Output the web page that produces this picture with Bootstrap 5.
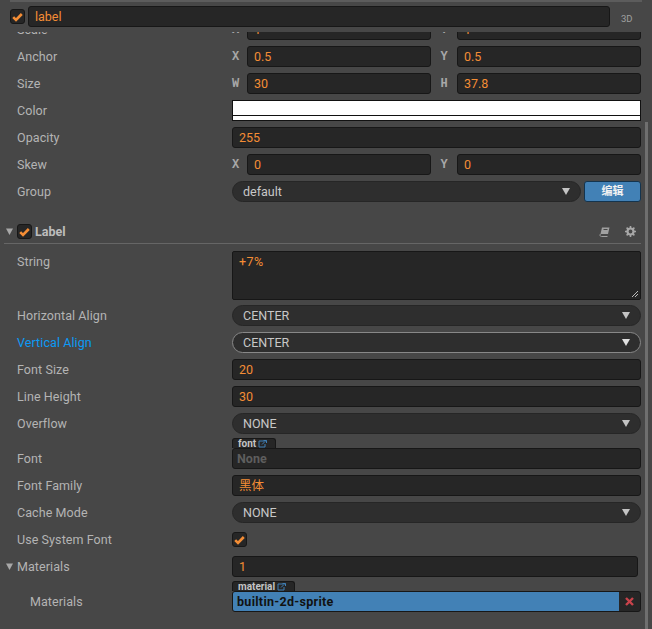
<!DOCTYPE html>
<html lang="zh">
<head>
<meta charset="utf-8">
<title>Inspector</title>
<link href="https://cdn.jsdelivr.net/npm/bootstrap@5.3.0/dist/css/bootstrap.min.css" rel="stylesheet">
<style>
html,body{height:629px;overflow:hidden;background:#474747;}
body{font-family:Roboto,"Noto Sans CJK SC",sans-serif;font-size:12.5px;color:#b4b4b4;}
.shell{width:652px;height:629px;position:relative;overflow:hidden;}
.topline{height:2px;margin-left:10px;width:632px;background:#5c5c5c;}
.headbar{height:30px;padding:4px 0 0 10px;gap:3px;background:#474747;}
.topcheck{margin-top:3px;}
.tbox.topname{width:582px;flex:none;}
.tag3d{margin-left:8px;font-size:9.5px;color:#a0a0a0;}
.pane{height:597px;overflow:hidden;padding:0 11px 0 17px;}
.clipped{height:11px;overflow:hidden;display:flex;flex-direction:column;justify-content:flex-end;}
.clipped .prow{flex:none;}
.prow{height:27px;display:flex;align-items:center;}
.plabel{width:215px;flex:none;white-space:nowrap;letter-spacing:.08px;}
.prow>.plabel{padding-top:2px;}
.pvalue{flex:1;min-width:0;display:flex;align-items:center;}
.tbox{height:21px;background:#262626;border:1px solid #171717;border-radius:3px;color:#f48d35;padding:0 6px;line-height:19px;flex:1;min-width:0;white-space:nowrap;overflow:hidden;}
.axis{width:15px;flex:none;font-family:"Liberation Mono",monospace;font-size:12px;color:#a8a8a8;font-weight:700;}
.axis.second{width:26px;text-align:center;}
.colorbox{height:21px;width:100%;background:#fff;border:1px solid #111;position:relative;}
.colorbox::after{content:"";position:absolute;left:0;right:0;bottom:4px;height:1px;background:#111;}
.picker{height:21px;flex:1;background:#2e2e2e;border:1px solid #262626;border-radius:10.5px;color:#c8c8c8;padding:0 10px;line-height:19px;display:flex;align-items:center;justify-content:space-between;}
.picker.lit{border-color:#888;}
.caretmark{width:8px;height:7px;flex:none;}
.bluebtn{width:57px;height:21px;margin-left:3px;background:#4281b6;border:1px solid #14344e;border-radius:3px;color:#f2f2f2;font-size:11px;font-weight:700;text-align:center;line-height:19px;flex:none;}
.compgap{height:13px;}
.comphead{height:26px;padding-top:2px;border-bottom:1px solid #666;margin-left:-13px;display:flex;align-items:center;}
.twist{width:7px;height:7px;flex:none;margin-left:2px;margin-right:4px;}
.compname{font-weight:700;color:#bdbdbd;margin-left:3px;font-size:12.5px;padding-top:2px;}
.iconset{margin-left:auto;gap:15px;padding-right:5px;}
.cbox{width:15px;height:15px;background:#262626;border:1px solid #171717;border-radius:3px;display:flex;align-items:center;justify-content:center;flex:none;}
.strrow{height:49px;margin-top:7px;margin-bottom:2px;display:flex;align-items:flex-start;}
.strrow .plabel{line-height:22px;}
.strbox{height:49px;flex:1;background:#262626;border:1px solid #171717;border-radius:2px;color:#f48d35;padding:2px 6px;position:relative;line-height:16px;letter-spacing:.4px;}
.grip{position:absolute;right:1px;bottom:1px;width:8px;height:8px;}
.lit-label{color:#0b9af5;}
.assetrow{height:35px;display:flex;align-items:flex-end;}
.assetrow .plabel{height:21px;line-height:21px;margin-bottom:3px;}
.assetbody{position:relative;flex:1;min-width:0;margin-bottom:3px;}
.assettab{position:absolute;left:0;top:-10px;height:10px;padding:0 8px 0 5px;background:#262626;border:1px solid #171717;border-bottom:0;border-radius:3px 3px 0 0;color:#c4c4c4;font-size:10px;font-weight:700;line-height:9px;display:flex;align-items:center;gap:2px;}
.tbox.ghost{color:#5e5e5e;font-weight:700;padding-left:4px;}
.subrow{padding-left:13px;}
.assetrow.subrow .plabel{width:202px;}
.indented{margin-left:-13px;}
.endgap{margin-right:3px;}
.linkbox{height:21px;display:flex;background:#262626;border:1px solid #171717;border-radius:3px;overflow:hidden;}
.linkname{flex:1;background:#4281b6;color:#111;font-weight:700;padding:0 4px;line-height:19px;letter-spacing:.3px;}
.linkdel{width:21px;flex:none;display:flex;align-items:center;justify-content:center;}
.thumb{position:absolute;left:645px;top:122px;width:3px;height:507px;background:#6f6f6f;}
</style>
</head>
<body>
<div class="shell">
  <div class="topline"></div>
  <div class="headbar d-flex align-items-start">
    <div class="cbox topcheck"><svg width="11" height="10" viewBox="0 0 11 10"><path d="M1.2 5.2 4 8 9.8 2" fill="none" stroke="#f48d35" stroke-width="2.6"/></svg></div>
    <div class="tbox topname">label</div>
    <div class="tag3d align-self-center">3D</div>
  </div>
  <div class="pane">
    <div class="clipped"><div class="prow"><div class="plabel">Scale</div><div class="pvalue"><span class="axis">X</span><div class="tbox">1</div><span class="axis second">Y</span><div class="tbox">1</div></div></div></div>
    <div class="prow"><div class="plabel">Anchor</div><div class="pvalue"><span class="axis">X</span><div class="tbox">0.5</div><span class="axis second">Y</span><div class="tbox">0.5</div></div></div>
    <div class="prow"><div class="plabel">Size</div><div class="pvalue"><span class="axis">W</span><div class="tbox">30</div><span class="axis second">H</span><div class="tbox">37.8</div></div></div>
    <div class="prow"><div class="plabel">Color</div><div class="pvalue"><div class="colorbox"></div></div></div>
    <div class="prow"><div class="plabel">Opacity</div><div class="pvalue"><div class="tbox">255</div></div></div>
    <div class="prow"><div class="plabel">Skew</div><div class="pvalue"><span class="axis">X</span><div class="tbox">0</div><span class="axis second">Y</span><div class="tbox">0</div></div></div>
    <div class="prow"><div class="plabel">Group</div><div class="pvalue"><div class="picker"><span>default</span><svg class="caretmark" viewBox="0 0 8 7"><path d="M0 0h8L4 7z" fill="#c4c4c4"/></svg></div><div class="bluebtn">编辑</div></div></div>
    <div class="compgap"></div>
    <div class="comphead">
      <svg class="twist" viewBox="0 0 7 7"><path d="M0 .5h7L3.500 7z" fill="#a8a8a8"/></svg>
      <div class="cbox"><svg width="11" height="10" viewBox="0 0 11 10"><path d="M1.2 5.2 4 8 9.8 2" fill="none" stroke="#f48d35" stroke-width="2.6"/></svg></div>
      <span class="compname">Label</span>
      <div class="iconset d-flex align-items-center">
        <svg width="11" height="10" viewBox="0 0 11 10"><path d="M3 .5h7.500L9 7H1.500z" fill="#a0a0a0"/><path d="M1.500 7C.5 8 1 9.500 2.500 9.500H8.500" fill="none" stroke="#a0a0a0" stroke-width="1"/><path d="M4.500 2.500h4" stroke="#474747"/></svg>
        <svg width="11" height="11" viewBox="0 0 11 11"><circle cx="5.5" cy="5.5" r="3" fill="none" stroke="#a8a8a8" stroke-width="2.2"/><path d="M5.500 0v2M5.500 9v2M0 5.500h2M9 5.500h2M1.600 1.600l1.400 1.400M8 8l1.400 1.400M9.400 1.600 8 3M3 8 1.600 9.400" stroke="#a8a8a8" stroke-width="1.6"/></svg>
      </div>
    </div>
    <div class="strrow"><div class="plabel">String</div><div class="strbox">+7%<svg class="grip" viewBox="0 0 8 8"><path d="M1 7 7 1M4 7l3-3" stroke="#bbb" stroke-width="1"/></svg></div></div>
    <div class="prow"><div class="plabel">Horizontal Align</div><div class="pvalue"><div class="picker"><span>CENTER</span><svg class="caretmark" viewBox="0 0 8 7"><path d="M0 0h8L4 7z" fill="#c4c4c4"/></svg></div></div></div>
    <div class="prow"><div class="plabel lit-label">Vertical Align</div><div class="pvalue"><div class="picker lit"><span>CENTER</span><svg class="caretmark" viewBox="0 0 8 7"><path d="M0 0h8L4 7z" fill="#e0e0e0"/></svg></div></div></div>
    <div class="prow"><div class="plabel">Font Size</div><div class="pvalue"><div class="tbox">20</div></div></div>
    <div class="prow"><div class="plabel">Line Height</div><div class="pvalue"><div class="tbox">30</div></div></div>
    <div class="prow"><div class="plabel">Overflow</div><div class="pvalue"><div class="picker"><span>NONE</span><svg class="caretmark" viewBox="0 0 8 7"><path d="M0 0h8L4 7z" fill="#c4c4c4"/></svg></div></div></div>
    <div class="assetrow"><div class="plabel">Font</div>
      <div class="assetbody"><div class="assettab">font<svg width="9" height="8" viewBox="0 0 9 8"><path d="M6 1H1v6h6V4" fill="none" stroke="#3f7fb5"/><path d="M4 4.500 8 .5M5.500.5H8.500V3" fill="none" stroke="#3f7fb5"/></svg></div><div class="tbox ghost">None</div></div>
    </div>
    <div class="prow"><div class="plabel">Font Family</div><div class="pvalue"><div class="tbox">黑体</div></div></div>
    <div class="prow"><div class="plabel">Cache Mode</div><div class="pvalue"><div class="picker"><span>NONE</span><svg class="caretmark" viewBox="0 0 8 7"><path d="M0 0h8L4 7z" fill="#c4c4c4"/></svg></div></div></div>
    <div class="prow"><div class="plabel">Use System Font</div><div class="pvalue"><div class="cbox"><svg width="11" height="10" viewBox="0 0 11 10"><path d="M1.2 5.2 4 8 9.8 2" fill="none" stroke="#f48d35" stroke-width="2.6"/></svg></div></div></div>
    <div class="prow indented"><svg class="twist" viewBox="0 0 7 7"><path d="M0 .5h7L3.500 7z" fill="#a8a8a8"/></svg><div class="plabel">Materials</div><div class="pvalue endgap"><div class="tbox">1</div></div></div>
    <div class="assetrow subrow"><div class="plabel">Materials</div>
      <div class="assetbody"><div class="assettab">material<svg width="9" height="8" viewBox="0 0 9 8"><path d="M6 1H1v6h6V4" fill="none" stroke="#3f7fb5"/><path d="M4 4.500 8 .5M5.500.5H8.500V3" fill="none" stroke="#3f7fb5"/></svg></div>
        <div class="linkbox"><div class="linkname">builtin-2d-sprite</div><div class="linkdel"><svg width="9" height="9" viewBox="0 0 9 9"><path d="M1 1 8 8M8 1 1 8" stroke="#c9434b" stroke-width="2.4"/></svg></div></div>
      </div>
    </div>
  </div>
  <div class="thumb"></div>
</div>
</body>
</html>
